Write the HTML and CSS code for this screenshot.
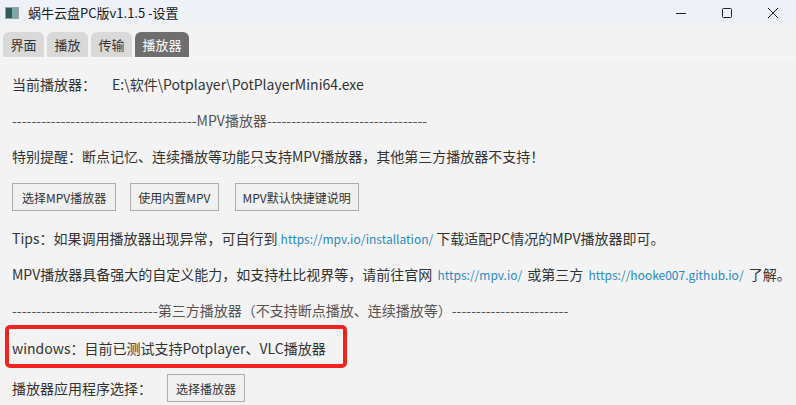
FILE: index.html
```html
<!DOCTYPE html>
<html lang="zh">
<head>
<meta charset="utf-8">
<title>蜗牛云盘PC版v1.1.5 -设置</title>
<link rel="stylesheet" href="styles.css">
</head>
<body>
<div class="window">
  <div class="titlebar">
    <div class="app-title">
      <svg class="app-icon" width="14" height="12" viewBox="0 0 14 12">
        <rect x="0.5" y="0.5" width="13" height="11" fill="#e8ecef" stroke="#9aa3a8"/>
        <rect x="1" y="1" width="6" height="10" fill="#2f5a57"/>
        <rect x="7" y="1" width="6" height="10" fill="#7fa6b0"/>
      </svg>
      <span>蜗牛云盘PC版v1.1.5 -设置</span>
    </div>
    <div class="controls">
      <span class="ctl"><svg width="12" height="12" viewBox="0 0 12 12"><path d="M1 6.5h10" stroke="#222" stroke-width="1"/></svg></span>
      <span class="ctl"><svg width="12" height="12" viewBox="0 0 12 12"><rect x="1.5" y="1.5" width="9" height="9" rx="1" fill="none" stroke="#222" stroke-width="1"/></svg></span>
      <span class="ctl"><svg width="12" height="12" viewBox="0 0 12 12"><path d="M1 1L11 11M11 1L1 11" stroke="#222" stroke-width="1"/></svg></span>
    </div>
  </div>
  <div class="tabs">
    <span class="tab">界面</span>
    <span class="tab">播放</span>
    <span class="tab">传输</span>
    <span class="tab active">播放器</span>
  </div>
  <div class="content">
    <div class="row"><span class="label">当前播放器：</span><span>E:\软件\Potplayer\PotPlayerMini64.exe</span></div>
    <div class="row dash">--------------------------------------MPV播放器---------------------------------</div>
    <div class="row">特别提醒：断点记忆、连续播放等功能只支持MPV播放器，其他第三方播放器不支持！</div>
    <div class="btn-row">
      <button class="btn wide">选择MPV播放器</button>
      <button class="btn">使用内置MPV</button>
      <button class="btn">MPV默认快捷键说明</button>
    </div>
    <div class="row">Tips：如果调用播放器出现异常，可自行到 <a class="link">https://mpv.io/installation/</a> 下载适配PC情况的MPV播放器即可。</div>
    <div class="row">MPV播放器具备强大的自定义能力，如支持杜比视界等，请前往官网 <a class="link spaced">https://mpv.io/</a> 或第三方 <a class="link spaced">https://hooke007.github.io/</a> 了解。</div>
    <div class="row dash">------------------------------第三方播放器（不支持断点播放、连续播放等）------------------------</div>
    <div class="row highlighted"><span class="mark"></span>windows：目前已测试支持Potplayer、VLC播放器</div>
    <div class="row last"><span class="label2">播放器应用程序选择：</span><button class="btn">选择播放器</button></div>
  </div>
</div>
</body>
</html>
```
FILE: styles.css
```css
html, body {
  margin: 0;
  padding: 0;
}
body {
  width: 796px;
  height: 405px;
  overflow: hidden;
  background: #f3f3f3;
  font-family: "Noto Sans CJK SC", "Noto Sans", sans-serif;
  color: #333;
}
.window {
  display: flex;
  flex-direction: column;
}
.titlebar {
  height: 25px;
  background: #eef2f8;
  display: flex;
  align-items: center;
  justify-content: space-between;
}
.app-title {
  display: flex;
  align-items: center;
  font-size: 13px;
  color: #1a1a1a;
}
.app-icon {
  margin-left: 5px;
  margin-right: 9px;
}
.controls {
  display: flex;
  height: 100%;
}
.ctl {
  width: 46px;
  height: 100%;
  display: flex;
  align-items: center;
  justify-content: center;
}
.tabs {
  display: flex;
  gap: 3px;
  margin-top: 7px;
  padding-left: 3px;
  height: 25px;
  border-bottom: 1px solid #f8f8f8;
}
.tab {
  background: #d9d9d9;
  color: #333;
  font-size: 13px;
  border-radius: 6px 6px 0 0;
  width: 41px;
  display: flex;
  align-items: center;
  justify-content: center;
}
.tab.active {
  background: #6e6e6e;
  color: #fff;
  width: 54px;
}
.content {
  padding-left: 12px;
  padding-top: 8px;
  font-size: 14px;
}
.row {
  height: 36px;
  display: flex;
  align-items: center;
  white-space: pre;
}
.label {
  width: 100px;
}
.dash {
  color: #555;
}
.btn-row {
  display: flex;
  gap: 14px;
  margin: 9px 0 9px;
}
.btn {
  font-family: "Noto Sans CJK SC", "Noto Sans", sans-serif;
  font-size: 12px;
  color: #333;
  background: #f0f0f0;
  border: 1px solid #adadad;
  border-radius: 0;
  height: 28px;
  padding: 0 7px;
}
.btn.wide {
  padding: 0 9px;
}
.btn-row .btn:last-child {
  margin-left: 2px;
}
.link {
  color: #2a8ac2;
  font-size: 12px;
  text-decoration: none;
}
.link.spaced {
  margin: 0 2px;
}
.highlighted {
  position: relative;
  margin-top: 2px;
}
.mark {
  position: absolute;
  left: -7px;
  top: -5px;
  width: 334px;
  height: 35px;
  border: 4px solid #f0231e;
  border-radius: 5px;
}
.row.last {
  height: 44px;
}
.label2 {
  width: 155px;
}
.last .btn {
  padding: 0 8px;
}
```
